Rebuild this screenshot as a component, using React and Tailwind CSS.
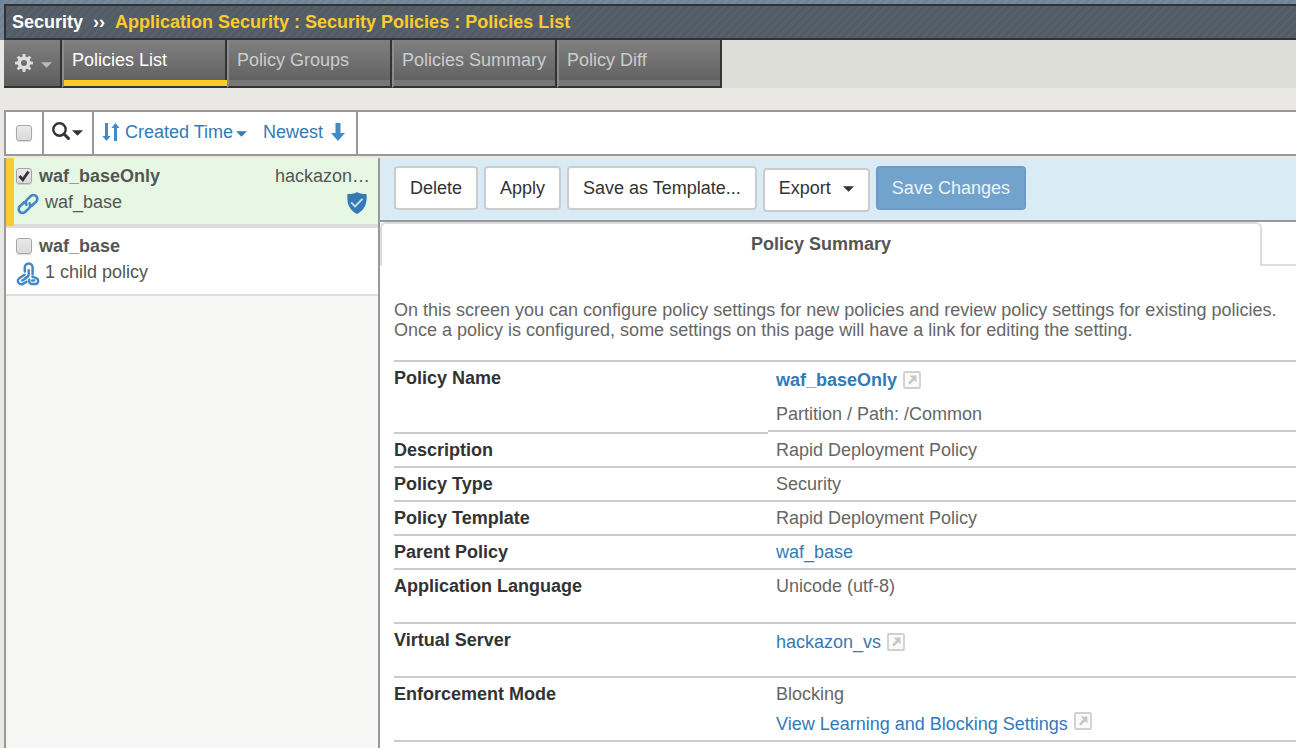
import React from "react";

function Caret({ className }) {
  return (
    <svg viewBox="0 0 12 6" className={className} aria-hidden="true">
      <path d="M0 0h12L6 6z" fill="currentColor" />
    </svg>
  );
}

function GearIcon() {
  const teeth = [0, 45, 90, 135, 180, 225, 270, 315];
  return (
    <svg viewBox="0 0 18 18" className="size-[18px] text-[#dedede]" aria-hidden="true">
      <circle cx="9" cy="9" r="4.7" fill="none" stroke="currentColor" strokeWidth="3.4" />
      {teeth.map((a) => (
        <path key={a} d="M7.2 3.8L7.7 0h2.6l.5 3.8z" fill="currentColor" transform={`rotate(${a} 9 9)`} />
      ))}
    </svg>
  );
}

function SearchIcon() {
  return (
    <svg viewBox="0 0 18 18" className="size-[18px]" fill="none" stroke="currentColor" aria-hidden="true">
      <circle cx="7.5" cy="7.5" r="6.2" strokeWidth="2.4" />
      <path d="M12 12l4.4 4.4" strokeWidth="3" strokeLinecap="round" />
    </svg>
  );
}

function SortIcon() {
  return (
    <svg viewBox="0 0 18 18" className="size-[18px] text-[#428bca]" fill="currentColor" aria-hidden="true">
      <path d="M3 0h3v13h2.6L4.500 18 .4 13H3z" />
      <path d="M12 18h3V5h2.600L13.500 0 9.400 5H12z" />
    </svg>
  );
}

function DownArrowIcon() {
  return (
    <svg viewBox="0 0 14 18" className="h-[18px] w-[14px] text-[#428bca]" fill="currentColor" aria-hidden="true">
      <path d="M4.500 0h5v10H14l-7 8-7-8h4.500z" />
    </svg>
  );
}

function LinkIcon() {
  return (
    <svg viewBox="0 0 24 24" className="size-6 shrink-0 text-[#4389c5]" fill="none" stroke="currentColor" strokeWidth="2.7" strokeLinecap="round" aria-hidden="true">
      <g transform="rotate(-43 12 12)">
        <path d="M10.500 8.200H4.500a3.800 3.800 0 0 0 0 7.600h5.500a3.800 3.800 0 0 0 3.600-3.200" />
        <path d="M13.500 15.800h6a3.800 3.800 0 0 0 0-7.600H14a3.800 3.800 0 0 0-3.600 3.200" />
      </g>
    </svg>
  );
}

function ChildLinkIcon() {
  return (
    <svg viewBox="0 0 24 24" className="size-6 shrink-0 text-[#4389c5]" fill="none" stroke="currentColor" strokeWidth="2.5" strokeLinecap="round" aria-hidden="true">
      <path d="M8.800 9.600V5.400a3.900 3.900 0 0 1 7.800 0v6.800" />
      <path d="M12.700 8.200v4c0 2-1.200 3-3 3.600" />
      <path d="M8.600 12.700l-5 3.300a3.300 3.300 0 0 0 3.200 5.800l3.600-1.900" />
      <path d="M6.200 18.500l3.600-2.100" />
      <path d="M16.400 14.600l4.200 1.800a3 3 0 0 1-1.600 5.600h-3a3.200 3.200 0 0 1-2.800-4.200" />
      <path d="M16.200 18.400h1.800" />
    </svg>
  );
}

function ShieldIcon() {
  return (
    <svg viewBox="0 0 20 22" className="h-[22px] w-5" aria-hidden="true">
      <path d="M10 0c2.500 1.500 5.500 2.200 9.500 2 .8 8-.8 15.500-9.500 20C1.300 17.500-.3 10 .5 2 4.500 2.200 7.500 1.500 10 0z" fill="#337ab7" />
      <path d="M4.200 10.300l3.800 4.200L15.500 6.800" fill="none" stroke="#cfe2f0" strokeWidth="1.800" />
    </svg>
  );
}

function OpenIcon() {
  return (
    <svg viewBox="0 0 18 18" className="size-[18px] shrink-0" fill="none" aria-hidden="true">
      <rect x="1" y="1" width="16" height="16" rx="1" fill="#fafafa" stroke="#d0d0d0" strokeWidth="1.800" />
      <path d="M6.500 4.500h7v7l-2.200-2.200-4.500 4.200-1.700-1.700 4.200-4.500z" fill="#c8c8c8" />
    </svg>
  );
}

function Checkbox({ label, checked = false }) {
  return (
    <span className="grid size-4 shrink-0">
      <input
        type="checkbox"
        aria-label={label}
        defaultChecked={checked}
        className="peer col-start-1 row-start-1 size-4 appearance-none rounded-[3px] border border-[#a6a6a6] bg-linear-to-b from-[#e9e9e9] to-[#dadada] shadow-[0_1px_1px_#00000026]"
      />
      <svg viewBox="0 0 16 16" className="pointer-events-none invisible col-start-1 row-start-1 size-4 peer-checked:visible" aria-hidden="true">
        <path d="M3.500 8l3.300 3.800L12.500 3.500" fill="none" stroke="#333" strokeWidth="2.800" />
      </svg>
    </span>
  );
}

const tabs = ["Policies List", "Policy Groups", "Policies Summary", "Policy Diff"];

function Tab({ name, active }) {
  return (
    <a
      href="#"
      className={
        "flex h-12 w-[165px] flex-col border-b-2 border-l-2 border-b-[#333] border-l-[#8c8c8c] bg-linear-to-b from-[#808080] to-[#5e5e5e] " +
        (active ? "text-white" : "text-[#ccc]")
      }
    >
      <span className="flex-1 border-r-2 border-[#333] pl-2 leading-10 whitespace-nowrap">{name}</span>
      <span className={"h-2 " + (active ? "bg-[#ffca2c]" : "border-r-2 border-[#333] bg-[#777]")} />
    </a>
  );
}

function ActionButton({ children, className = "" }) {
  return (
    <button type="button" className={"h-11 rounded border-2 px-3.5 whitespace-nowrap " + (className || "border-[#ccc] bg-white text-[#333]")}>
      {children}
    </button>
  );
}

function Row({ label, rowClass = "h-[34px]", valueClass = "h-[34px]", children }) {
  return (
    <tr className="align-top">
      <th scope="row" className={"w-[374px] border-b-2 border-[#ccc] pt-1.5 text-left leading-5 font-bold text-[#333] " + rowClass}>
        {label}
      </th>
      <td className="p-0">
        <div className={"border-b-2 border-[#ccc] pt-1.5 pl-2 leading-5 " + valueClass}>{children}</div>
      </td>
    </tr>
  );
}

const linkClass = "text-[#337ab7]";

export default function App() {
  return (
    <div className="flex min-h-screen flex-col bg-[#e9e8e4] font-['Liberation_Sans',Arial,sans-serif] text-[18px] leading-5 text-[#666]">
      <header className="bg-[repeating-linear-gradient(135deg,#718396_0px,#718396_3px,#768899_3px,#768899_6px)] pt-1 pl-1">
        <div className="flex h-9 items-center border-y-2 border-l-2 border-[#333] bg-[repeating-linear-gradient(135deg,#515c67_0px,#515c67_3px,#55606b_3px,#55606b_6px)] pl-1.5 font-bold whitespace-nowrap">
          <span className="text-white">Security</span>
          <span className="pl-2.5 text-white">››</span>
          <h1 className="pl-2.5 text-[#ffca2c]">Application Security : Security Policies : Policies List</h1>
        </div>
      </header>

      <div className="pl-1">
        <nav className="flex h-12 bg-[#deded9]">
          <button
            type="button"
            aria-label="Options"
            className="flex w-[58px] items-center gap-2 border-r-2 border-b-2 border-[#333] bg-linear-to-b from-[#808080] to-[#5e5e5e] pl-[11px]"
          >
            <GearIcon />
            <Caret className="mt-1 h-[6px] w-[11px] text-[#bbb]" />
          </button>
          {tabs.map((name, i) => (
            <Tab key={name} name={name} active={i === 0} />
          ))}
        </nav>
      </div>

      <div className="flex flex-1 flex-col pt-[22px] pl-1">
        <div className="flex h-[46px] border-y-2 border-l-2 border-[#999] bg-white">
          <div className="flex w-[38px] items-center border-r-2 border-[#999] pl-2.5">
            <Checkbox label="Select all policies" />
          </div>
          <button type="button" aria-label="Search" className="flex w-[50px] items-center gap-0.5 border-r-2 border-[#999] pb-1 pl-2 text-[#333]">
            <SearchIcon />
            <Caret className="mt-1 h-[6px] w-[11px]" />
          </button>
          <div className="flex w-[264px] items-center gap-4 border-r-2 border-[#999] pb-0.5 pl-2">
            <button type="button" className={"flex items-center gap-[5px] whitespace-nowrap " + linkClass}>
              <SortIcon />
              Created Time
              <Caret className="mt-1 -ml-0.5 h-[6px] w-[11px]" />
            </button>
            <button type="button" className={"flex items-center gap-2 " + linkClass}>
              Newest
              <DownArrowIcon />
            </button>
          </div>
        </div>

        <div className="mt-0.5 flex flex-1">
          <aside className="w-[376px] shrink-0 border-x-2 border-[#999] bg-[#f6f6f5] text-[#555]">
            <ul>
              <li className="flex h-[70px] bg-[#ddd]">
                <span className="h-[68px] w-2 bg-[#ffca2c]" />
                <div className="flex flex-1 flex-col gap-1 border-b-4 border-[#ddd] bg-[#e6f8e3] pt-2 pr-2 pl-0.5">
                  <div className="flex items-center gap-[7px]">
                    <Checkbox label="Select waf_baseOnly" checked />
                    <strong className="flex-1 leading-5">waf_baseOnly</strong>
                    <span>hackazon…</span>
                  </div>
                  <div className="flex items-start gap-[5px] pr-[3px]">
                    <div className="pt-0.5">
                      <LinkIcon />
                    </div>
                    <span className="flex-1 pt-0.5">waf_base</span>
                    <div className="pt-0.5">
                      <ShieldIcon />
                    </div>
                  </div>
                </div>
              </li>
              <li className="flex h-[68px] flex-col gap-1 border-b-2 border-[#ddd] bg-white pt-2 pl-2.5">
                <div className="flex items-center gap-[7px]">
                  <Checkbox label="Select waf_base" />
                  <strong>waf_base</strong>
                </div>
                <div className="flex items-start gap-[5px]">
                  <div className="pt-0.5">
                    <ChildLinkIcon />
                  </div>
                  <span className="pt-0.5">1 child policy</span>
                </div>
              </li>
            </ul>
          </aside>

          <main className="min-w-0 flex-1 bg-white">
            <div className="flex h-16 items-start border-b-2 border-[#999] bg-[#d9ebf5] pt-2 pl-3.5">
              <div className="flex gap-1.5">
                <ActionButton>Delete</ActionButton>
                <ActionButton>Apply</ActionButton>
                <ActionButton>Save as Template...</ActionButton>
                <div className="pt-0.5">
                  <ActionButton>
                    <span className="flex items-center gap-3 pb-1">
                      Export
                      <Caret className="mt-0.5 h-[6px] w-[11px]" />
                    </span>
                  </ActionButton>
                </div>
                <ActionButton className="border-[#6b9bc5] bg-[#72a3cd] text-[#eaf3fa]">Save Changes</ActionButton>
              </div>
            </div>

            <div className="flex">
              <h2 className="h-11 flex-1 rounded-t-md border-x-2 border-t-2 border-[#ddd] pt-2.5 text-center font-bold text-[#555]">
                Policy Summary
              </h2>
              <div className="w-[34px] border-b-2 border-[#ddd]" />
            </div>

            <p className="pt-[34px] pl-3.5">
              On this screen you can configure policy settings for new policies and review policy settings for existing policies. Once a policy is
              configured, some settings on this page will have a link for editing the setting.
            </p>

            <div className="pt-5 pl-3.5">
              <table className="w-full table-fixed border-separate border-spacing-0 border-t-2 border-[#ccc]">
                <tbody>
                  <Row label="Policy Name" rowClass="h-[72px]" valueClass="h-[70px]">
                    <div className="flex h-6 items-center gap-1.5">
                      <a href="#" className={"font-bold " + linkClass}>waf_baseOnly</a>
                      <OpenIcon />
                    </div>
                    <div className="pt-3">Partition / Path: /Common</div>
                  </Row>
                  <Row label="Description">Rapid Deployment Policy</Row>
                  <Row label="Policy Type">Security</Row>
                  <Row label="Policy Template">Rapid Deployment Policy</Row>
                  <Row label="Parent Policy">
                    <a href="#" className={linkClass}>waf_base</a>
                  </Row>
                  <Row label="Application Language" rowClass="h-[54px]" valueClass="h-[54px]">Unicode (utf-8)</Row>
                  <Row label="Virtual Server" rowClass="h-[54px]" valueClass="h-[54px]">
                    <div className="flex h-6 items-center gap-1.5">
                      <a href="#" className={linkClass}>hackazon_vs</a>
                      <OpenIcon />
                    </div>
                  </Row>
                  <Row label="Enforcement Mode" rowClass="h-[64px]" valueClass="h-[64px]">
                    Blocking
                    <div className="flex h-6 items-start gap-1.5 pt-2">
                      <a href="#" className={"pt-0.5 " + linkClass}>View Learning and Blocking Settings</a>
                      <OpenIcon />
                    </div>
                  </Row>
                </tbody>
              </table>
            </div>
          </main>
        </div>
      </div>
    </div>
  );
}
